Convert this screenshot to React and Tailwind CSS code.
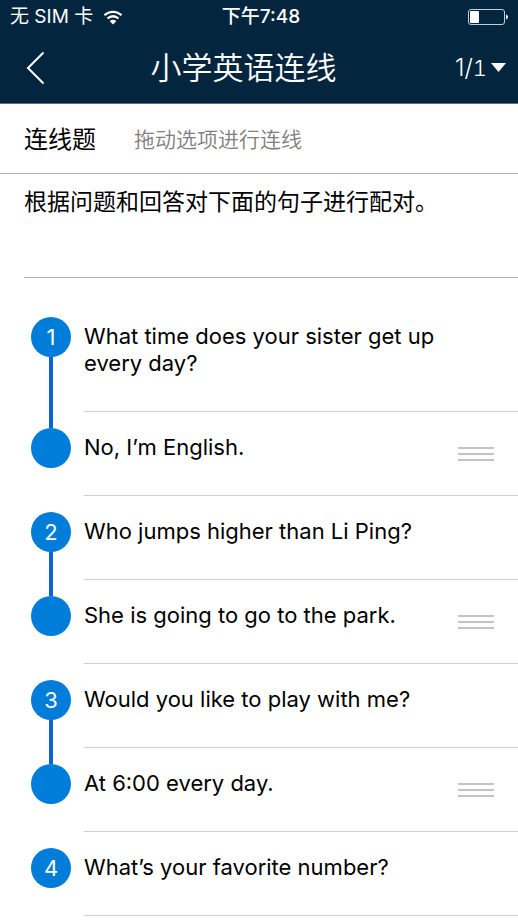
import React from "react";

const ROWS = [
  { number: 1, text: "What time does your sister get up every day?" },
  { text: "No, I’m English." },
  { number: 2, text: "Who jumps higher than Li Ping?" },
  { text: "She is going to go to the park." },
  { number: 3, text: "Would you like to play with me?" },
  { text: "At 6:00 every day." },
  { number: 4, text: "What’s your favorite number?", open: true },
];

function StatusBar() {
  return (
    <div className="grid h-[34px] grid-cols-3 items-center px-2.5 text-[19px] leading-6">
      <div className="flex items-center gap-2.5">
        <span className="whitespace-nowrap">无 SIM 卡</span>
        <svg width="20" height="15" viewBox="0 0 22 16" fill="none" stroke="currentColor" aria-hidden="true">
          <path d="M1.6 5.6a13.3 13.3 0 0 1 18.8 0" strokeWidth="2.5" />
          <path d="M5 9.1a8.5 8.5 0 0 1 12 0" strokeWidth="2.5" />
          <path d="M11 15.6 7.4 12a5 5 0 0 1 7.2 0Z" fill="currentColor" stroke="none" />
        </svg>
      </div>
      <span className="pl-1 text-center font-medium">下午7:48</span>
      <svg className="justify-self-end" width="40" height="16" viewBox="0 0 40 16" aria-hidden="true">
        <rect x="0.5" y="0.5" width="36" height="15" rx="2.5" fill="none" stroke="#c3cdd5" />
        <rect x="2" y="2" width="9" height="12" rx="1" fill="white" />
        <path d="M38 5.5q2 .7 2 2.5t-2 2.5Z" fill="white" />
      </svg>
    </div>
  );
}

function NavBar() {
  return (
    <div className="flex h-[69px] items-center pr-3 pb-0.5 pl-6">
      <button type="button" aria-label="返回">
        <svg width="24" height="34" viewBox="0 0 24 34" fill="none" stroke="white" strokeWidth="2">
          <path d="M19.5 1.5 4 17l15.5 15.5" />
        </svg>
      </button>
      <h1 className="mr-4 flex-1 text-center text-[31px] leading-10 font-[350]">小学英语连线</h1>
      <button type="button" aria-haspopup="listbox" className="flex items-center gap-1">
        <span className="text-2xl font-[350]">
          1/<span className="text-[22px] tabular-nums">1</span>
        </span>
        <svg width="15" height="9" viewBox="0 0 15 9" fill="white" aria-hidden="true">
          <path d="M0 0h15L7.5 9Z" />
        </svg>
      </button>
    </div>
  );
}

function DragHandle({ label }) {
  return (
    <button type="button" aria-label={label} className="mt-[13px] flex h-[14px] w-9 shrink-0 cursor-grab flex-col justify-between">
      <span className="h-0.5 w-full bg-[#c2c2c8]" />
      <span className="h-0.5 w-full bg-[#c2c2c8]" />
      <span className="h-0.5 w-full bg-[#c2c2c8]" />
    </button>
  );
}

function Row({ row }) {
  const isQuestion = row.number !== undefined;
  return (
    <li className="flex gap-[13px] pl-[31px]">
      <div className="flex w-10 flex-col items-center">
        <span className={isQuestion ? "h-4" : "h-4 w-1 bg-[#0f62d2]"} />
        <span className="flex size-10 shrink-0 items-center justify-center rounded-full bg-[#007cd9] text-[22px] text-white">
          {row.number}
        </span>
        {isQuestion && !row.open && <span className="w-1 flex-1 bg-[#0f62d2]" />}
      </div>
      <div className="flex flex-1 justify-between gap-4 border-b border-[#cfcfcf] pt-[22px] pr-6 pb-[34px] text-[22px] leading-[27px]">
        <p>{row.text}</p>
        {!isQuestion && <DragHandle label={"拖动 " + row.text} />}
      </div>
    </li>
  );
}

export default function App() {
  return (
    <div className="min-h-screen bg-white font-['Inter','Noto_Sans_CJK_SC',sans-serif] text-black">
      <header className="border-b border-[#5b6c7b] bg-[#03253e] text-white">
        <StatusBar />
        <NavBar />
      </header>
      <main>
        <div className="flex h-[70px] items-center gap-[38px] border-b border-[#b4b4b4] pt-0.5 pl-6">
          <h2 className="text-2xl">连线题</h2>
          <p className="text-[21px] font-[350] text-[#808080]">拖动选项进行连线</p>
        </div>
        <section className="pl-6">
          <p className="border-b border-[#b4b4b4] pt-3 pb-[59px] text-[23px] leading-8">根据问题和回答对下面的句子进行配对。</p>
        </section>
        <ol className="pt-[23px]">
          {ROWS.map((row) => (
            <Row key={row.text} row={row} />
          ))}
        </ol>
      </main>
    </div>
  );
}
